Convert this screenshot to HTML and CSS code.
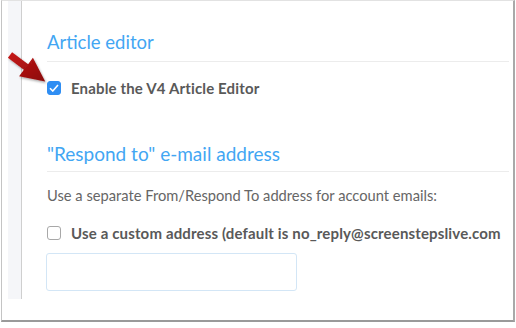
FILE: index.html
```html
<!DOCTYPE html>
<html lang="en">
<head>
    <meta charset="UTF-8">
    <title>Article editor settings</title>
    <link rel="stylesheet" href="styles.css">
</head>
<body>
    <div class="window">
        <div class="gutter"></div>
        <div class="content">
            <h2 class="section-title">Article editor</h2>
            <label class="check-row">
                <span class="box checked">
                    <svg width="10" height="8" viewBox="0 0 10 8"><path d="M1 4.2 L3.8 7 L9 1" fill="none" stroke="#fff" stroke-width="1.6"/></svg>
                </span>
                <span class="check-label">Enable the V4 Article Editor</span>
            </label>

            <h2 class="section-title second">"Respond to" e-mail address</h2>
            <p class="help">Use a separate From/Respond To address for account emails:</p>
            <label class="check-row">
                <span class="box"></span>
                <span class="check-label">Use a custom address (default is no_reply@screenstepslive.com</span>
            </label>
            <div class="text-input"></div>
        </div>

        <!-- annotation arrow -->
        <svg class="arrow" width="60" height="100" viewBox="0 0 60 100">
            <defs>
                <linearGradient id="ar" x1="0" y1="0" x2="1" y2="1">
                    <stop offset="0" stop-color="#c81a1a"/>
                    <stop offset="1" stop-color="#8a0909"/>
                </linearGradient>
                <filter id="sh" x="-20%" y="-20%" width="150%" height="150%">
                    <feDropShadow dx="1" dy="1.5" stdDeviation="1" flood-color="#000" flood-opacity="0.35"/>
                </filter>
            </defs>
            <path d="M12.1 52.2 L28.1 64.2 L32.9 57.8 L45.2 81.4 L19.1 76.2 L23.9 69.8 L7.9 57.8 Z" fill="url(#ar)" filter="url(#sh)"/>
        </svg>
    </div>
</body>
</html>
```

FILE: styles.css
```css
* {
    box-sizing: border-box;
}

body {
    margin: 0;
    background: #fff;
    font-family: Lato, "Open Sans", sans-serif;
}

.window {
    position: relative;
    display: flex;
    align-items: flex-start;
    width: 514px;
    height: 322px;
    margin-left: 1px;
    background: #fff;
    border-left: 1px solid #c4c4c4;
    border-top: 1px solid #e2e2e2;
    border-right: 2px solid #a9a9a9;
    border-bottom: 2px solid #9a9a9a;
    overflow: hidden;
}

.gutter {
    flex: none;
    width: 14px;
    height: 298px;
    margin-left: 6px;
    background: #f5f6f9;
    border-right: 1px solid #cfcfcf;
}

.content {
    flex: 1;
    padding-left: 25px;
    padding-right: 4px;
    min-width: 0;
}

.section-title {
    margin: 29px 0 0;
    padding-bottom: 7px;
    border-bottom: 1px solid #ececec;
    font-size: 18.5px;
    font-weight: 400;
    line-height: 24px;
    color: #42a6f3;
}

.section-title.second {
    margin-top: 45px;
    padding-bottom: 5px;
    font-size: 19px;
}

.check-row {
    display: flex;
    align-items: center;
    gap: 10px;
    margin-top: 17px;
    white-space: nowrap;
}

.help + .check-row {
    margin-top: 19px;
}

.box {
    flex: none;
    display: flex;
    align-items: center;
    justify-content: center;
    width: 14px;
    height: 14px;
    border: 1px solid #a8a8a8;
    border-radius: 3px;
    background: #fff;
}

.box.checked {
    background: #2f8ef3;
    border-color: #2f8ef3;
}

.check-label {
    font-size: 15px;
    font-weight: 700;
    letter-spacing: 0.15px;
    color: #595959;
}

.help {
    margin: 13px 0 0;
    font-size: 14.7px;
    line-height: 20px;
    color: #666;
}

.check-row + .text-input {
    margin-top: 11px;
}

.text-input {
    width: 251px;
    height: 38px;
    margin-left: -1px;
    border: 1px solid #d3e6f6;
    border-radius: 3px;
}

.arrow {
    position: absolute;
    left: -2px;
    top: -1px;
}
```
